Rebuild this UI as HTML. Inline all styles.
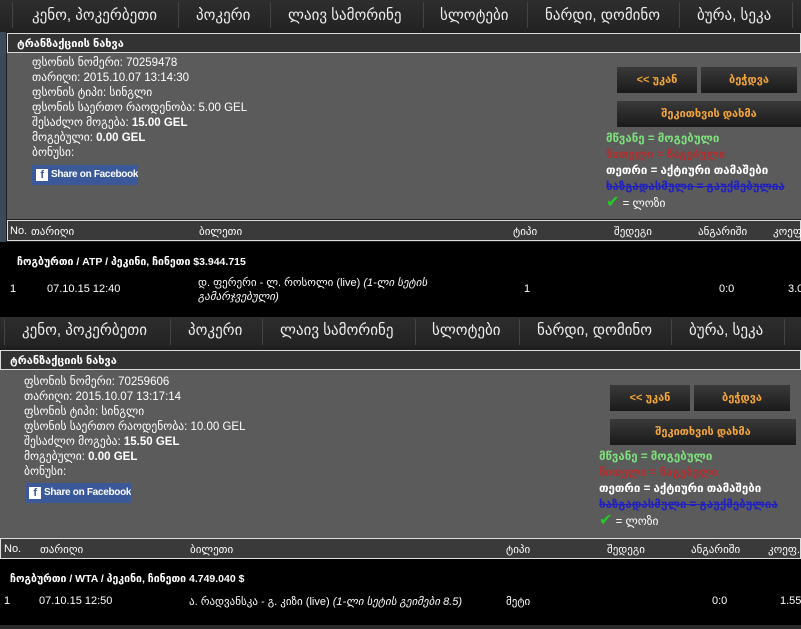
<!DOCTYPE html>
<html><head><meta charset="utf-8"><style>
*{margin:0;padding:0;box-sizing:border-box}
body{width:801px;height:629px;overflow:hidden;background:#1e1e1e;font-family:"Liberation Sans","DejaVu Sans",sans-serif;color:#fff;position:relative}
.a{position:absolute;white-space:nowrap}
.nav{position:absolute;left:0;width:801px;background:linear-gradient(#2e2e2e,#222);}
.nav span{position:absolute;top:6px;font-size:15px;color:#eee;white-space:nowrap}
.nav i{position:absolute;top:2px;width:1px;height:26px;background:#111;border-right:1px solid #444}
.title{position:absolute;height:20px;border:1px solid #ddd;background:#333;font-size:11px;font-weight:bold;padding:3px 9px;white-space:nowrap}
.panel{position:absolute;background:#5b5b5b}
.info{position:absolute;font-size:11.5px;line-height:15px;color:#fff;white-space:nowrap}
.fb{position:absolute;width:106px;height:20px;background:#3b5998;font-size:10px;font-weight:bold;padding:4px 0 0 19px;white-space:nowrap;overflow:hidden;letter-spacing:-0.3px}
.fb b{position:absolute;left:4px;top:4px;width:12px;height:12px;background:#fff;color:#3b5998;font-size:11px;line-height:13px;text-align:center}
.btn{position:absolute;height:26px;background:linear-gradient(#3a3a3a,#1a1a1a);color:#f4a53a;font-size:11px;font-weight:bold;text-align:center;line-height:26px;white-space:nowrap}
.leg{position:absolute;font-size:11.5px;line-height:16px;font-weight:bold;white-space:nowrap}
.th{position:absolute;height:21px;border:1px solid #ddd;background:#3a3a3a;font-size:11px}
.th span{position:absolute;top:4px;white-space:nowrap}
.blk{position:absolute;background:#000;left:0;width:801px}
.blk span{position:absolute;font-size:11px;white-space:nowrap}
</style></head><body>
<div class="a" style="left:0;top:32px;width:6px;height:290px;background:#3a4a5a"></div>

<div class="nav" style="top:0;height:32px">
<i style="left:12px"></i><span style="left:32px">კენო, პოკერბეთი</span>
<i style="left:178px"></i><span style="left:196px">პოკერი</span>
<i style="left:270px"></i><span style="left:288px">ლაივ სამორინე</span>
<i style="left:423px"></i><span style="left:440px">სლოტები</span>
<i style="left:527px"></i><span style="left:545px">ნარდი, დომინო</span>
<i style="left:679px"></i><span style="left:697px">ბურა, სეკა</span>
<i style="left:792px"></i>
</div>
<div class="title" style="left:7px;top:33px;width:794px">ტრანზაქციის ნახვა</div>
<div class="panel" style="left:7px;top:53px;width:794px;height:166px"></div>
<div class="info" style="left:32px;top:56px">ფსონის ნომერი: 70259478<br>თარიღი: 2015.10.07 13:14:30<br>ფსონის ტიპი: სინგლი<br>ფსონის საერთო რაოდენობა: 5.00 GEL<br>შესაძლო მოგება: <b>15.00 GEL</b><br>მოგებული: <b>0.00 GEL</b><br>ბონუსი:</div>
<div class="fb" style="left:32px;top:165px"><b>f</b>Share on Facebook!</div>
<div class="btn" style="left:617px;top:67px;width:80px">&lt;&lt; უკან</div>
<div class="btn" style="left:701px;top:67px;width:96px">ბეჭდვა</div>
<div class="btn" style="left:617px;top:101px;width:184px">შეკითხვის დახმა</div>
<div class="leg" style="left:606px;top:131px"><span style="color:#7de07d">მწვანე = მოგებული</span><br><span style="color:#b03030">წითელი = წაგებული</span><br><span style="color:#fff">თეთრი = აქტიური თამაშები</span><br><span style="color:#2020c0;text-decoration:line-through">ხაზგადასმული = გაუქმებულია</span><br><span style="color:#2c2;font-size:16px">✔</span> <span style="font-weight:normal">= ლოზი</span></div>
<div class="th" style="left:7px;top:220px;width:794px"><span style="left:2px">No.</span><span style="left:23px">თარიღი</span><span style="left:191px">ბილეთი</span><span style="left:505px">ტიპი</span><span style="left:606px">შედეგი</span><span style="left:690px">ანგარიში</span><span style="left:765px">კოეფ</span></div>
<div class="blk" style="top:242px;height:75px"><span style="left:17px;top:14px;font-weight:bold;font-size:10.5px">ჩოგბურთი / ATP / პეკინი, ჩინეთი $3.944.715</span><span style="left:10px;top:41px">1</span><span style="left:47px;top:41px">07.10.15 12:40</span><span style="left:198px;top:34px">დ. ფერერი - ლ. როსოლი (live) <i>(1-ლი სეტის</i></span><span style="left:198px;top:48px"><i>გამარჯვებული)</i></span><span style="left:524px;top:41px">1</span><span style="left:719px;top:41px">0:0</span><span style="left:788px;top:41px">3.0</span></div>

<div class="nav" style="top:317px;height:30px">
<i style="left:4px"></i><span style="left:22px;top:4px">კენო, პოკერბეთი</span>
<i style="left:170px"></i><span style="left:188px;top:4px">პოკერი</span>
<i style="left:262px"></i><span style="left:280px;top:4px">ლაივ სამორინე</span>
<i style="left:415px"></i><span style="left:432px;top:4px">სლოტები</span>
<i style="left:519px"></i><span style="left:537px;top:4px">ნარდი, დომინო</span>
<i style="left:671px"></i><span style="left:689px;top:4px">ბურა, სეკა</span>
<i style="left:784px"></i>
</div>
<div class="title" style="left:0;top:350px;width:801px">ტრანზაქციის ნახვა</div>
<div class="panel" style="left:0;top:370px;width:801px;height:168px"></div>
<div class="info" style="left:24px;top:375px">ფსონის ნომერი: 70259606<br>თარიღი: 2015.10.07 13:17:14<br>ფსონის ტიპი: სინგლი<br>ფსონის საერთო რაოდენობა: 10.00 GEL<br>შესაძლო მოგება: <b>15.50 GEL</b><br>მოგებული: <b>0.00 GEL</b><br>ბონუსი:</div>
<div class="fb" style="left:25px;top:483px"><b>f</b>Share on Facebook!</div>
<div class="btn" style="left:610px;top:385px;width:80px">&lt;&lt; უკან</div>
<div class="btn" style="left:694px;top:385px;width:96px">ბეჭდვა</div>
<div class="btn" style="left:610px;top:419px;width:186px">შეკითხვის დახმა</div>
<div class="leg" style="left:599px;top:449px"><span style="color:#7de07d">მწვანე = მოგებული</span><br><span style="color:#b03030">წითელი = წაგებული</span><br><span style="color:#fff">თეთრი = აქტიური თამაშები</span><br><span style="color:#2020c0;text-decoration:line-through">ხაზგადასმული = გაუქმებულია</span><br><span style="color:#2c2;font-size:16px">✔</span> <span style="font-weight:normal">= ლოზი</span></div>
<div class="th" style="left:0;top:538px;width:801px"><span style="left:3px">No.</span><span style="left:39px">თარიღი</span><span style="left:189px">ბილეთი</span><span style="left:505px">ტიპი</span><span style="left:606px">შედეგი</span><span style="left:690px">ანგარიში</span><span style="left:767px">კოეფ.</span></div>
<div class="blk" style="top:559px;height:66px"><span style="left:10px;top:14px;font-weight:bold;font-size:10.5px">ჩოგბურთი / WTA / პეკინი, ჩინეთი 4.749.040 $</span><span style="left:4px;top:36px">1</span><span style="left:39px;top:36px">07.10.15 12:50</span><span style="left:189px;top:36px">ა. რადვანსკა - გ. კიზი (live) <i>(1-ლი სეტის გეიმები 8.5)</i></span><span style="left:506px;top:36px">მეტი</span><span style="left:712px;top:36px">0:0</span><span style="left:780px;top:36px">1.55</span></div>
<div class="a" style="left:0;top:625px;width:801px;height:4px;background:#2a2a2a"></div>
</body></html>
